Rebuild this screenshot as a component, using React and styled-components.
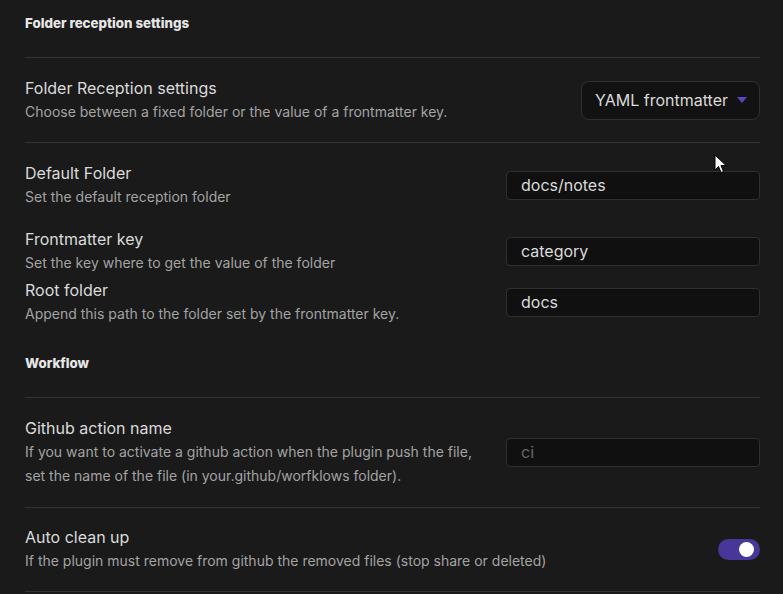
import styled, { createGlobalStyle } from "styled-components";

const GlobalStyle = createGlobalStyle`
    html, body {
        margin: 0;
        padding: 0;
        background: #1a1a1a;
    }
    body {
        font-family: Inter, "Noto Sans", sans-serif;
        -webkit-font-smoothing: antialiased;
    }
`;

const Page = styled.div`
    position: relative;
    width: 783px;
    height: 594px;
    overflow: hidden;
    background: #1a1a1a;
    padding: 0 23px 0 25px;
    box-sizing: border-box;
`;

const Heading = styled.div`
    padding: ${(p) => p.$top || 14}px 0 25px;
    border-bottom: 1px solid #333;
    color: #e6e6e6;
    font-size: 13.3px;
    font-weight: 800;
    line-height: 18px;
`;

const Item = styled.div`
    display: flex;
    align-items: center;
    padding: ${(p) => p.$pad || "18px 0"};
    border-bottom: ${(p) => (p.$line ? "1px solid #333" : "none")};
`;

const Info = styled.div`
    flex: 1 1 auto;
    margin-right: 16px;
    min-width: 0;
`;

const Name = styled.div`
    color: #dadada;
    font-size: 16px;
    line-height: 24px;
`;

const Description = styled.div`
    color: #a3a3a3;
    font-size: 14px;
    line-height: 24px;
`;

const Control = styled.div`
    flex: 0 0 auto;
    display: flex;
    justify-content: flex-end;
`;

const Dropdown = styled.div`
    display: flex;
    align-items: center;
    gap: 9px;
    height: 39px;
    box-sizing: border-box;
    padding: 0 12px 0 13px;
    background: #121212;
    border: 1px solid #303030;
    border-radius: 8px;
    color: #dadada;
    font-size: 16px;
`;

const TextInput = styled.div`
    width: 254px;
    height: 29px;
    box-sizing: border-box;
    display: flex;
    align-items: center;
    padding: 0 14px;
    background: #101010;
    border: 1px solid #303030;
    border-radius: 4px;
    color: ${(p) => (p.$placeholder ? "#666" : "#dadada")};
    font-size: 16px;
`;

const Toggle = styled.div`
    position: relative;
    width: 42px;
    height: 21px;
    border-radius: 11px;
    background: ${(p) => (p.$on ? "#483699" : "#3a3a3a")};
    &::after {
        content: "";
        position: absolute;
        top: 3px;
        ${(p) => (p.$on ? "right: 6px;" : "left: 3px;")}
        width: 15px;
        height: 15px;
        border-radius: 50%;
        background: #fff;
    }
`;

const Cursor = styled.svg`
    position: absolute;
    left: 714px;
    top: 154px;
`;

function Setting({ name, desc, children, pad, line }) {
    return (
        <Item $pad={pad} $line={line}>
            <Info>
                <Name>{name}</Name>
                <Description>{desc}</Description>
            </Info>
            <Control>{children}</Control>
        </Item>
    );
}

export default function App() {
    return (
        <>
            <GlobalStyle />
            <Page>
                <Heading>Folder reception settings</Heading>
                <Setting
                    name="Folder Reception settings"
                    desc="Choose between a fixed folder or the value of a frontmatter key."
                    line
                >
                    <Dropdown>
                        YAML frontmatter
                        <svg width="10" height="6" viewBox="0 0 10 6">
                            <path d="M0 0 L10 0 L5 6 Z" fill="#5a45c6" />
                        </svg>
                    </Dropdown>
                </Setting>
                <Setting name="Default Folder" desc="Set the default reception folder" pad="18px 0 18px">
                    <TextInput>docs/notes</TextInput>
                </Setting>
                <Setting
                    name="Frontmatter key"
                    desc="Set the key where to get the value of the folder"
                    pad="0 0 3px"
                >
                    <TextInput>category</TextInput>
                </Setting>
                <Setting
                    name="Root folder"
                    desc="Append this path to the folder set by the frontmatter key."
                    pad="0"
                >
                    <TextInput>docs</TextInput>
                </Setting>
                <Heading $top={28}>Workflow</Heading>
                <Setting
                    name="Github action name"
                    desc="If you want to activate a github action when the plugin push the file, set the name of the file (in your.github/worfklows folder)."
                    pad="18px 0 19px"
                    line
                >
                    <TextInput $placeholder>ci</TextInput>
                </Setting>
                <Setting
                    name="Auto clean up"
                    desc="If the plugin must remove from github the removed files (stop share or deleted)"
                    pad="17px 0 18px"
                    line
                >
                    <Toggle $on />
                </Setting>
                <Cursor width="13" height="20" viewBox="0 0 13 20">
                    <path
                        d="M1 1 L1 16 L4.5 12.5 L7 18.5 L9.5 17.5 L7 11.5 L12 11.5 Z"
                        fill="#fff"
                        stroke="#000"
                        strokeWidth="1"
                        strokeLinejoin="round"
                    />
                </Cursor>
            </Page>
        </>
    );
}
